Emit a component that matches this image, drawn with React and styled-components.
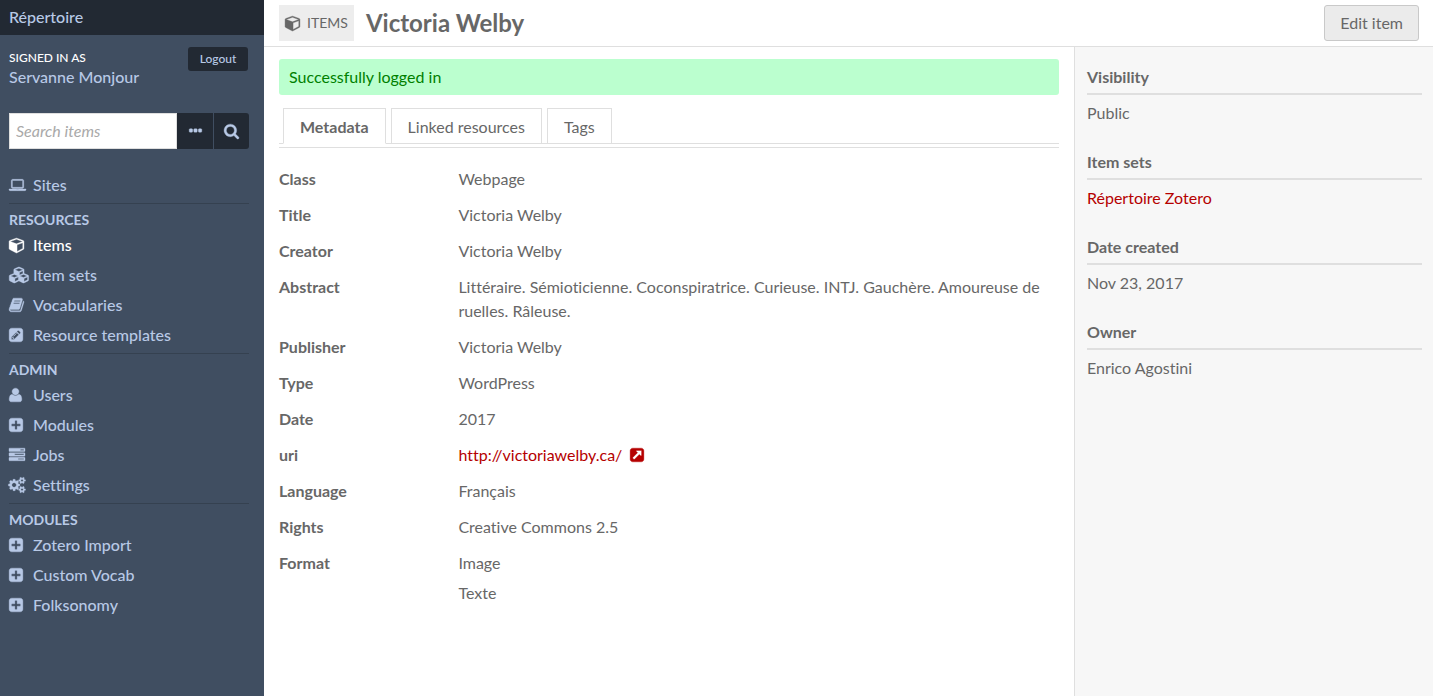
import React from "react";
import styled, { createGlobalStyle } from "styled-components";

const color = {
  slate: "#404e61",
  ink: "#222933",
  ice: "#b8c9e6",
  text: "#676767",
  rule: "#dfdfdf",
  red: "#b50000",
};

const GlobalStyle = createGlobalStyle`
  *, *::before, *::after { box-sizing: border-box; }
  body {
    margin: 0;
    background: #fff;
    color: ${color.text};
    font-family: Lato, "Liberation Sans", sans-serif;
    font-size: 16px;
    line-height: 24px;
    font-variant-ligatures: none;
  }
  h1, h2, h3, p, ul, dl, dd { margin: 0; padding: 0; }
  ul { list-style: none; }
  a { color: inherit; text-decoration: none; }
  button, input { font: inherit; margin: 0; }
  button { cursor: pointer; }
`;

const square =
  "M1536 416v960q0 119-84.5 203.5t-203.5 84.5h-960q-119 0-203.5-84.5t-84.5-203.5v-960q0-119 84.5-203.5t203.5-84.5h960q119 0 203.5 84.5t84.5 203.5z";
const dot = "v192q0 40-28 68t-68 28h-192q-40 0-68-28t-28-68v-192q0-40 28-68t68-28h192q40 0 68 28t28 68z";
const bar = "v256q0 26-19 45t-45 19h-1664q-26 0-45-19t-19-45v-256q0-26 19-45t45-19h1664q26 0 45 19t19 45z";
const smallCog =
  "v140q0 16-149 31-12 27-30 52 51 113 51 138 0 4-4 7-122 71-124 71-8 0-46-47t-52-68q-20 2-30 2t-30-2q-14 21-52 68t-46 47q-2 0-124-71-4-3-4-7 0-25 51-138-18-25-30-52-149-15-149-31v-140q0-16 149-31 13-29 30-52-51-113-51-138 0-4 4-7 4-2 35-20t59-34 30-16q8 0 46 46.5t52 67.5q20-2 30-2t30 2q51-71 92-112l6-2q4 0 124 70 4 3 4 7 0 25-51 138 17 23 30 52 149 15 149 31z";

const icons = {
  laptop: [1920, "M416 1280q-66 0-113-47t-47-113v-704q0-66 47-113t113-47h1088q66 0 113 47t47 113v704q0 66-47 113t-113 47h-1088zm-32-864v704q0 13 9.5 22.5t22.5 9.5h1088q13 0 22.5-9.5t9.5-22.5v-704q0-13-9.5-22.5t-22.5-9.5h-1088q-13 0-22.5 9.5t-9.5 22.5zm1376 928h160v96q0 40-47 68t-113 28h-1600q-66 0-113-28t-47-68v-96h1760zm-720 96q16 0 16-16t-16-16h-160q-16 0-16 16t16 16h160z"],
  cube: [1664, "M896 1629l640-349v-636l-640 233v752zm-64-865l698-254-698-254-698 254 698 254zm832-252v768q0 35-18 65t-49 47l-704 384q-28 16-61 16t-61-16l-704-384q-31-17-49-47t-18-65v-768q0-40 23-73t61-47l704-256q22-8 44-8t44 8l704 256q38 14 61 47t23 73z"],
  cubes: [2304, "M640 1632l384-192v-314l-384 164v342zm-64-454l404-173-404-173-404 173zm1088 454l384-192v-314l-384 164v342zm-64-454l404-173-404-173-404 173zm-448-293l384-165v-266l-384 164v267zm-64-379l441-189-441-189-441 189zm1088 518v416q0 36-19 67t-52 47l-448 224q-25 14-57 14t-57-14l-448-224q-4-2-7-4-2 2-7 4l-448 224q-25 14-57 14t-57-14l-448-224q-33-16-52-47t-19-67v-416q0-38 21.5-70t56.5-48l434-186v-400q0-38 21.5-70t56.5-48l448-192q23-10 50-10t50 10l448 192q35 16 56.5 48t21.5 70v400l434 186q36 16 57 48t21 70z"],
  book: [1664, "M1639 478q40 57 18 129l-275 906q-19 64-76.5 107.5t-122.5 43.5h-923q-77 0-148.5-53.5t-99.5-131.5q-24-67-2-127 0-4 3-27t4-37q1-8-3-21.5t-3-19.5q2-11 8-21t16.5-23.5 16.5-23.5q23-38 45-91.5t30-91.5q3-10 .5-30t-.5-28q3-11 17-28t17-23q21-36 42-92t25-90q1-9-2.5-32t.5-28q4-13 22-30.5t22-22.5q19-26 42.5-84.5t27.5-96.5q1-8-3-25.5t-2-26.5q2-8 9-18t18-23 17-21q8-12 16.5-30.5t15-35 16-36 19.5-32 26.5-23.5 36-11.5 47.5 5.5l-1 3q38-9 51-9h761q74 0 114 56t18 130l-274 906q-36 119-71.5 153.5t-128.5 34.5h-869q-27 0-38 15-11 16-1 43 24 70 144 70h923q29 0 56-15.5t35-41.5l300-987q7-22 5-57 38 15 59 43zm-1064 2q-4 13 2 22.5t20 9.5h608q13 0 25.5-9.5t16.5-22.5l21-64q4-13-2-22.5t-20-9.5h-608q-13 0-25.5 9.5t-16.5 22.5zm-83 256q-4 13 2 22.5t20 9.5h608q13 0 25.5-9.5t16.5-22.5l21-64q4-13-2-22.5t-20-9.5h-608q-13 0-25.5 9.5t-16.5 22.5z"],
  pencil: [1536, "M404 1108l152 152-52 52h-56v-96h-96v-56zm414-390q14 13-3 30l-291 291q-17 17-30 3-14-13 3-30l291-291q17-17 30-3zm-274 690l544-544-288-288-544 544v288h288zm608-608l92-92q28-28 28-68t-28-68l-152-152q-28-28-68-28t-68 28l-92 92z" + square],
  user: [1408, "M1408 1405q0 120-73 189.5t-194 69.5h-874q-121 0-194-69.5t-73-189.5q0-53 3.5-103.5t14-109 26.5-108.5 43-97.5 62-81 85.5-53.5 111.5-20q9 0 42 21.5t74.5 48 108 48 133.5 21.5 133.5-21.5 108-48 74.5-48 42-21.5q61 0 111.5 20t85.5 53.5 62 81 43 97.5 26.5 108.5 14 109 3.5 103.5zm-320-893q0 159-112.5 271.5t-271.5 112.5-271.5-112.5-112.5-271.5 112.5-271.5 271.5-112.5 271.5 112.5 112.5 271.5z"],
  plus: [1536, "M1280 960v-128q0-26-19-45t-45-19h-320v-320q0-26-19-45t-45-19h-128q-26 0-45 19t-19 45v320h-320q-26 0-45 19t-19 45v128q0 26 19 45t45 19h320v320q0 26 19 45t45 19h128q26 0 45-19t19-45v-320h320q26 0 45-19t19-45z" + square],
  tasks: [1792, "M1024 1408h640v-128h-640v128zm-384-512h1024v-128h-1024v128zm640-512h384v-128h-384v128zM1792 1216" + bar + "M1792 704" + bar + "M1792 192" + bar],
  cogs: [1920, "M832 896q0-106-75-181t-181-75-181 75-75 181 75 181 181 75 181-75 75-181zm768 512q0-52-38-90t-90-38-90 38-38 90q0 53 37.5 90.5t90.5 37.5 90.5-37.5 37.5-90.5zm0-1024q0-52-38-90t-90-38-90 38-38 90q0 53 37.5 90.5t90.5 37.5 90.5-37.5 37.5-90.5zm-384 421v185q0 10-7 19.5t-16 10.5l-155 24q-11 35-32 76 34 48 90 115 7 11 7 20 0 12-7 19-23 30-82.5 89.5t-78.5 59.5q-11 0-21-7l-115-90q-37 19-77 31-11 108-23 155-7 24-30 24h-186q-11 0-20-7.5t-10-17.5l-23-153q-34-10-75-31l-118 89q-7 7-20 7-11 0-21-8-144-133-144-160 0-9 7-19 10-14 41-53t47-61q-23-44-35-82l-152-24q-10-1-17-9.5t-7-19.5v-185q0-10 7-19.5t16-10.5l155-24q11-35 32-76-34-48-90-115-7-11-7-20 0-12 7-20 22-30 82-89t79-59q11 0 21 7l115 90q34-18 77-32 11-108 23-154 7-24 30-24h186q11 0 20 7.5t10 17.5l23 153q34 10 75 31l118-89q8-7 20-7 11 0 21 8 144 133 144 160 0 8-7 19-12 16-42 54t-45 60q23 48 34 82l152 23q10 2 17 10.5t7 19.5zM1856 1338" + smallCog + "M1856 314" + smallCog],
  search: [1664, "M1152 832q0-185-131.5-316.5t-316.5-131.5-316.5 131.5-131.5 316.5 131.5 316.5 316.5 131.5 316.5-131.5 131.5-316.5zm512 832q0 52-38 90t-90 38q-54 0-90-38l-343-342q-179 124-399 124-143 0-273.5-55.5t-225-150-150-225-55.5-273.5 55.5-273.5 150-225 225-150 273.5-55.5 273.5 55.5 225 150 150 225 55.5 273.5q0 220-124 399l343 343q37 37 37 90z"],
  ellipsis: [1408, "M384 736" + dot + "M896 736" + dot + "M1408 736" + dot],
  external: [1536, "M1280 928v-480q0-26-19-45t-45-19h-480q-42 0-59 39-17 41 14 70l144 144-534 534q-19 19-19 45t19 45l102 102q19 19 45 19t45-19l534-534 144 144q18 19 45 19 12 0 25-5 39-17 39-59z" + square],
};

const Glyph = styled.svg`
  display: block;
  flex: none;
  height: 16px;
  overflow: visible;
  fill: currentColor;
  stroke: currentColor;
  stroke-width: 40;
`;

function Icon({ name }) {
  const [width, d] = icons[name];
  return (
    <Glyph viewBox={`0 0 ${width} 1792`} width={Math.round(width / 112)} aria-hidden="true">
      <path fillRule="evenodd" d={d} />
    </Glyph>
  );
}

const Page = styled.div`
  display: flex;
  min-height: 100vh;
`;

const Sidebar = styled.header`
  flex: 0 0 264px;
  min-width: 0;
  background: ${color.slate};
  color: ${color.ice};
  font-weight: 500;
`;

const Brand = styled.div`
  padding: 5px 9px 6px;
  background: ${color.ink};
`;

const SidebarBody = styled.div`
  padding: 12px 15px 0 9px;
`;

const Account = styled.div`
  display: flex;
  justify-content: space-between;
  align-items: flex-start;
  margin-bottom: 26px;
  padding-right: 1px;
`;

const SignedIn = styled.p`
  padding-top: 2px;
`;

const SignedInLabel = styled.span`
  display: block;
  color: #fff;
  font-size: 12px;
  line-height: 18px;
  text-transform: uppercase;
`;

const UserLink = styled.a`
  display: block;
  line-height: 20px;
`;

const LogoutButton = styled.button`
  width: 60px;
  height: 24px;
  padding: 0;
  border: 0;
  border-radius: 3px;
  background: ${color.ink};
  color: ${color.ice};
  font-size: 12px;
`;

const SearchForm = styled.form`
  display: flex;
  height: 36px;
  margin-bottom: 21px;
`;

const SearchInput = styled.input`
  flex: 1;
  min-width: 0;
  padding: 0 6px;
  border: 1px solid ${color.rule};
  border-radius: 0;
  background: #fff;
  color: ${color.text};
  font-weight: 400;
  &::placeholder { color: #a9a9a9; font-style: italic; opacity: 1; }
`;

const SearchButton = styled.button`
  display: flex;
  align-items: center;
  justify-content: center;
  width: 36px;
  padding: 0;
  border: 0;
  border-left: ${(p) => (p.$last ? `1px solid ${color.slate}` : "0")};
  border-radius: ${(p) => (p.$last ? "0 3px 3px 0" : "0")};
  background: ${color.ink};
  color: ${color.ice};
`;

const NavSection = styled.section`
  & + & {
    margin-top: 3px;
    padding-top: 6px;
    border-top: 1px solid #354150;
  }
`;

const NavHeading = styled.h2`
  font-size: 14px;
  line-height: 20px;
  text-transform: uppercase;
`;

const NavLink = styled.a`
  display: grid;
  grid-template-columns: 24px 1fr;
  align-items: center;
  height: 30px;
  color: ${(p) => (p.$active ? "#fff" : "inherit")};
`;

const Content = styled.div`
  flex: 1;
  min-width: 0;
  display: flex;
  flex-direction: column;
`;

const TitleBar = styled.div`
  display: flex;
  align-items: center;
  padding: 5px 14px 5px 15px;
  border-bottom: 1px solid ${color.rule};
`;

const TypeBadge = styled.span`
  display: flex;
  align-items: center;
  gap: 7px;
  height: 36px;
  margin-right: 12px;
  padding: 0 6px;
  background: #ededed;
  font-size: 14px;
  text-transform: uppercase;
`;

const Title = styled.h1`
  flex: 1;
  font-size: 24px;
  line-height: 36px;
`;

const EditButton = styled.button`
  height: 36px;
  padding: 0 15px;
  border: 1px solid #c9c9c9;
  border-radius: 3px;
  background: #ebebeb;
  color: ${color.text};
`;

const Columns = styled.div`
  flex: 1;
  display: flex;
`;

const Main = styled.main`
  flex: 1;
  min-width: 0;
  padding: 12px 15px;
`;

const Message = styled.p`
  margin-bottom: 13px;
  padding: 6px 10px;
  border-radius: 3px;
  background: #bbffcf;
  color: #008000;
`;

const TabBar = styled.div`
  margin-bottom: 13px;
  padding-bottom: 3px;
  border-bottom: 1px solid ${color.rule};
`;

const TabList = styled.div`
  display: flex;
  gap: 5px;
  padding: 0 4px;
  border-bottom: 1px solid ${color.rule};
`;

const Tab = styled.button`
  margin-bottom: -1px;
  padding: 6px 16px 4px;
  border: 1px solid ${color.rule};
  border-bottom-color: ${(p) => (p.$active ? "#fff" : color.rule)};
  background: #fff;
  color: ${color.text};
  font-weight: ${(p) => (p.$active ? 700 : 400)};
`;

const Property = styled.div`
  display: grid;
  grid-template-columns: 23% 1fr;
  padding: 6px 0;
`;

const Term = styled.dt`
  font-weight: 700;
`;

const Values = styled.dd`
  display: grid;
  gap: 6px;
`;

const ValueLink = styled.a`
  display: flex;
  align-items: center;
  gap: 8px;
  color: ${color.red};
`;

const Aside = styled.aside`
  flex: 0 0 359px;
  padding: 18px 11px 18px 12px;
  border-left: 1px solid ${color.rule};
  background: #f7f7f7;
`;

const MetaGroup = styled.section`
  margin-bottom: 25px;
`;

const MetaHeading = styled.h2`
  margin-bottom: 6px;
  padding-bottom: 4px;
  border-bottom: 2px solid ${color.rule};
  font-size: 16px;
`;

const MetaLink = styled.a`
  color: ${color.red};
`;

const navigation = [
  { items: [["laptop", "Sites"]] },
  {
    heading: "Resources",
    items: [["cube", "Items", true], ["cubes", "Item sets"], ["book", "Vocabularies"], ["pencil", "Resource templates"]],
  },
  {
    heading: "Admin",
    items: [["user", "Users"], ["plus", "Modules"], ["tasks", "Jobs"], ["cogs", "Settings"]],
  },
  {
    heading: "Modules",
    items: [["plus", "Zotero Import"], ["plus", "Custom Vocab"], ["plus", "Folksonomy"]],
  },
];

const properties = [
  ["Class", ["Webpage"]],
  ["Title", ["Victoria Welby"]],
  ["Creator", ["Victoria Welby"]],
  ["Abstract", ["Littéraire. Sémioticienne. Coconspiratrice. Curieuse. INTJ. Gauchère. Amoureuse de ruelles. Râleuse."]],
  ["Publisher", ["Victoria Welby"]],
  ["Type", ["WordPress"]],
  ["Date", ["2017"]],
  ["uri", ["http://victoriawelby.ca/"]],
  ["Language", ["Français"]],
  ["Rights", ["Creative Commons 2.5"]],
  ["Format", ["Image", "Texte"]],
];

export default function App() {
  return (
    <>
      <GlobalStyle />
      <Page>
        <Sidebar>
          <Brand>
            <a href="#dashboard">Répertoire</a>
          </Brand>
          <SidebarBody>
            <Account>
              <SignedIn>
                <SignedInLabel>Signed in as</SignedInLabel>
                <UserLink href="#user">Servanne Monjour</UserLink>
              </SignedIn>
              <LogoutButton type="button">Logout</LogoutButton>
            </Account>
            <SearchForm role="search" onSubmit={(e) => e.preventDefault()}>
              <SearchInput type="text" placeholder="Search items" aria-label="Search items" />
              <SearchButton type="button" aria-label="Search options">
                <Icon name="ellipsis" />
              </SearchButton>
              <SearchButton type="submit" $last aria-label="Search">
                <Icon name="search" />
              </SearchButton>
            </SearchForm>
            <nav>
              {navigation.map((section, i) => (
                <NavSection key={i}>
                  {section.heading && <NavHeading>{section.heading}</NavHeading>}
                  <ul>
                    {section.items.map(([icon, label, active]) => (
                      <li key={label}>
                        <NavLink href={`#${label}`} $active={active}>
                          <Icon name={icon} />
                          {label}
                        </NavLink>
                      </li>
                    ))}
                  </ul>
                </NavSection>
              ))}
            </nav>
          </SidebarBody>
        </Sidebar>

        <Content>
          <TitleBar>
            <TypeBadge>
              <Icon name="cube" />
              Items
            </TypeBadge>
            <Title>Victoria Welby</Title>
            <EditButton type="button">Edit item</EditButton>
          </TitleBar>
          <Columns>
            <Main>
              <Message role="status">Successfully logged in</Message>
              <TabBar>
                <TabList role="tablist">
                  <Tab type="button" role="tab" aria-selected="true" $active>Metadata</Tab>
                  <Tab type="button" role="tab" aria-selected="false">Linked resources</Tab>
                  <Tab type="button" role="tab" aria-selected="false">Tags</Tab>
                </TabList>
              </TabBar>
              <dl>
                {properties.map(([term, values]) => (
                  <Property key={term}>
                    <Term>{term}</Term>
                    <Values>
                      {values.map((value) =>
                        value.startsWith("http") ? (
                          <ValueLink key={value} href={value}>
                            {value}
                            <Icon name="external" />
                          </ValueLink>
                        ) : (
                          <span key={value}>{value}</span>
                        )
                      )}
                    </Values>
                  </Property>
                ))}
              </dl>
            </Main>
            <Aside>
              <MetaGroup>
                <MetaHeading>Visibility</MetaHeading>
                <p>Public</p>
              </MetaGroup>
              <MetaGroup>
                <MetaHeading>Item sets</MetaHeading>
                <p><MetaLink href="#item-set">Répertoire Zotero</MetaLink></p>
              </MetaGroup>
              <MetaGroup>
                <MetaHeading>Date created</MetaHeading>
                <p>Nov 23, 2017</p>
              </MetaGroup>
              <MetaGroup>
                <MetaHeading>Owner</MetaHeading>
                <p>Enrico Agostini</p>
              </MetaGroup>
            </Aside>
          </Columns>
        </Content>
      </Page>
    </>
  );
}
